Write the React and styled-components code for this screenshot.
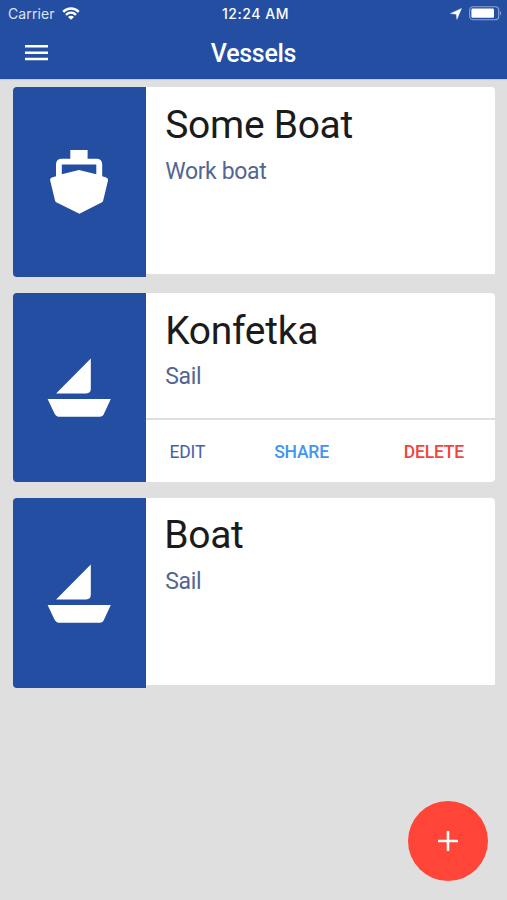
import React, { useState } from 'react'
import styled, { createGlobalStyle } from 'styled-components'

const vessels = [
   { id: 1, name: 'Some Boat', type: 'Work boat', icon: 'work' },
   { id: 2, name: 'Konfetka', type: 'Sail', icon: 'sail' },
   { id: 3, name: 'Boat', type: 'Sail', icon: 'sail' },
]

const WifiIcon = () => (
   <svg width="18" height="14" viewBox="0 0 18 14" fill="none" stroke="#fff" strokeWidth="2.4">
      <path d="M1.2 4.8C5.6 0.4 12.4 0.4 16.8 4.8" />
      <path d="M4 7.9C6.9 5.1 11.1 5.1 14 7.9" />
      <path d="M9 12.8L6 9.9C7.8 8.3 10.2 8.3 12 9.9Z" fill="#fff" stroke="none" />
   </svg>
)

const LocationIcon = () => (
   <svg width="12" height="12" viewBox="0 0 12 12" fill="#fff">
      <path d="M11.5 0.4L6.9 11.4L6.3 6.2L0.5 5.5Z" stroke="#fff" strokeWidth="0.4" />
   </svg>
)

const BatteryIcon = () => (
   <svg width="33" height="15" viewBox="0 0 33 15">
      <rect x="0.7" y="0.7" width="29" height="13" rx="3.4" fill="none" stroke="#8fa5d2" strokeWidth="1.1" />
      <rect x="2.4" y="2.6" width="22.6" height="9.2" rx="1.2" fill="#fff" />
      <path d="M31 5.2C32.4 5.6 32.4 8.8 31 9.2Z" fill="#8fa5d2" />
   </svg>
)

const WorkBoatIcon = () => (
   <svg width="60" height="66" viewBox="0 0 60 66" fill="#fff">
      <path
         fillRule="evenodd"
         d="M21.3 1H38.6V9.8H47.3Q53.2 9.8 53.2 15.6V27.2L57.2 28.5Q59.6 29.3 59 31.6L54.2 51.4Q54 52.6 53 53.2L30.4 64.8L7.2 53.2Q6.2 52.6 6 51.4L1.2 31.6Q0.6 29.3 3 28.5L7 27.2V15.6Q7 9.8 12.8 9.8H21.3ZM12.8 15.6V25.3L30 21L47.3 25.3V15.6Z"
      />
   </svg>
)

const SailBoatIcon = () => (
   <svg width="64" height="60" viewBox="0 -1 64 60" fill="#fff">
      <path d="M43.8 0.6V30.8Q43.8 35.4 39.1 35.4H9.1Z" />
      <path d="M0.6 41H63.8L57.1 55.4Q55.8 58.7 52.6 58.7H11.9Q8.9 58.7 7.5 55.6Z" />
   </svg>
)

const VesselCard = ({ vessel, open, onSelect }) => (
   <Card>
      <IconPanel>{vessel.icon === 'work' ? <WorkBoatIcon /> : <SailBoatIcon />}</IconPanel>
      <Content $open={open}>
         <Info onClick={onSelect}>
            <Name>{vessel.name}</Name>
            <Type>{vessel.type}</Type>
         </Info>
         {open && (
            <Actions>
               <Action $color="#4560a8">EDIT</Action>
               <Action $color="#3f96f3" $medium>
                  SHARE
               </Action>
               <Action $color="#f5423a" $medium>
                  DELETE
               </Action>
            </Actions>
         )}
      </Content>
   </Card>
)

const App = () => {
   const [openId, setOpenId] = useState(2)

   return (
      <>
         <GlobalStyle />
         <Screen>
            <Header>
               <StatusBar>
                  <Carrier>
                     Carrier
                     <WifiIcon />
                  </Carrier>
                  <Time>12:24 AM</Time>
                  <Indicators>
                     <LocationIcon />
                     <BatteryIcon />
                  </Indicators>
               </StatusBar>
               <TitleBar>
                  <MenuButton aria-label="Menu">
                     <svg width="23" height="16" viewBox="0 0 23 16" fill="#fff">
                        <path d="M0 0H23V2.5H0ZM0 6.4H23V8.9H0ZM0 12.8H23V15.3H0Z" />
                     </svg>
                  </MenuButton>
                  <Title>Vessels</Title>
               </TitleBar>
            </Header>
            <List>
               {vessels.map((vessel) => (
                  <VesselCard key={vessel.id} vessel={vessel} open={vessel.id === openId} onSelect={() => setOpenId(vessel.id)} />
               ))}
            </List>
            <AddButton aria-label="Add">
               <svg width="20" height="20" viewBox="0 0 20 20" stroke="#fff" strokeWidth="2.6">
                  <path d="M10 0V20M0 10H20" />
               </svg>
            </AddButton>
         </Screen>
      </>
   )
}

const GlobalStyle = createGlobalStyle`
   * {
      box-sizing: border-box;
   }

   body {
      margin: 0;
      background: #dfdfdf;
      font-family: Roboto, 'Liberation Sans', sans-serif;
   }

   button {
      border: none;
      padding: 0;
      background: none;
      font-family: inherit;
      cursor: pointer;
   }

   svg {
      display: block;
   }
`

const Screen = styled.div`
   position: relative;
   height: 900px;
   background: #dfdfdf;
   overflow: hidden;
`

const Header = styled.header`
   height: 79px;
   background: #244ea2;
   color: #fff;
   box-shadow: 0 1px 1px #bccbe6;
`

const StatusBar = styled.div`
   display: grid;
   grid-template-columns: 1fr auto 1fr;
   align-items: center;
   height: 27px;
   padding: 0 5px 0 8px;
   font-family: Inter, sans-serif;
   font-size: 14px;
`

const Carrier = styled.div`
   display: flex;
   align-items: center;
   gap: 7px;
   color: #dbe4f5;
   letter-spacing: 0.1px;
`

const Time = styled.div`
   padding-left: 1px;
   font-weight: 500;
   letter-spacing: 0.55px;
`

const Indicators = styled.div`
   display: flex;
   align-items: center;
   justify-content: flex-end;
   gap: 7px;
`

const TitleBar = styled.div`
   display: grid;
   grid-template-columns: 48px 1fr 48px;
   align-items: center;
   height: 52px;
`

const MenuButton = styled.button`
   padding: 0 0 1px 25px;
`

const Title = styled.h1`
   margin: 0;
   padding-top: 2px;
   font-size: 25px;
   font-weight: 500;
   line-height: 50px;
   letter-spacing: -0.3px;
   text-align: center;
`

const List = styled.main`
   display: flex;
   flex-direction: column;
   gap: 16px;
   padding: 8px 12px 0 13px;
`

const Card = styled.article`
   display: flex;
   align-items: flex-start;
   height: 189.5px;
`

const IconPanel = styled.div`
   display: flex;
   align-items: center;
   justify-content: center;
   width: 132.6px;
   height: 189.5px;
   border-radius: 4px 0 0 4px;
   background: #244ea2;
`

const Content = styled.div`
   display: flex;
   flex: 1;
   flex-direction: column;
   height: ${({ $open }) => ($open ? '189.5px' : '187px')};
   border-radius: ${({ $open }) => ($open ? '0 4px 4px 0' : '0 4px 1px 0')};
   background: #fff;
`

const Info = styled.div`
   flex: 1;
   padding: 14px 20px 0 19.6px;
   cursor: pointer;
`

const Name = styled.h2`
   margin: 0;
   color: #1b1b1b;
   font-size: 39px;
   font-weight: 400;
   line-height: 48px;
   letter-spacing: -0.3px;

   ${Card}:last-child & {
      margin: -1px 0 1px -1px;
   }
`

const Type = styled.p`
   margin: 8.5px 0 0;
   color: #536691;
   font-size: 23px;
   line-height: 28px;
   letter-spacing: -0.35px;
`

const Actions = styled.div`
   display: flex;
   align-items: center;
   justify-content: space-between;
   height: 64px;
   padding: 1px 31px 0 24px;
   border-top: 2.5px solid #dfdfdf;
`

const Action = styled.button`
   color: ${({ $color }) => $color};
   font-size: 17.5px;
   font-weight: ${({ $medium }) => ($medium ? 500 : 400)};
   letter-spacing: -0.2px;

   &:nth-child(2) {
      margin-right: 6px;
   }
`

const AddButton = styled.button`
   position: absolute;
   right: 19px;
   bottom: 19px;
   display: flex;
   align-items: center;
   justify-content: center;
   width: 80px;
   height: 80px;
   border-radius: 50%;
   background: #ff4538;
`

export default App
